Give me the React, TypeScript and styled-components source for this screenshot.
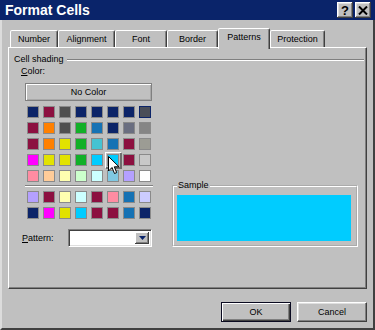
import React from "react";
import styled, { createGlobalStyle, css } from "styled-components";

const GlobalStyle = createGlobalStyle`
	html, body {
		margin: 0;
		padding: 0;
		background: #c0c0c0;
	}
	body {
		font-family: "Liberation Sans", Arial, sans-serif;
		font-size: 9px;
		color: #000;
	}
	* {
		box-sizing: border-box;
	}
`;

const Dialog = styled.div`
	width: 375px;
	height: 330px;
	background: #c0c0c0;
	display: flex;
	flex-direction: column;
	overflow: hidden;
`;

const TitleBar = styled.div`
	height: 20px;
	flex: none;
	background: #0a246a;
	display: flex;
	align-items: center;
	gap: 2px;
	padding: 0 4px 0 5px;
`;

const Title = styled.h1`
	flex: 1;
	margin: 0;
	color: #fff;
	font-size: 14px;
	font-weight: bold;
	line-height: 20px;
`;

const CaptionButton = styled.button`
	width: 16px;
	height: 16px;
	padding: 0;
	border: none;
	background: #c0c0c0;
	box-shadow: inset -1px -1px #404040, inset 1px 1px #fff,
		inset -2px -2px #808080, inset 2px 2px #dfdfdf;
	display: flex;
	align-items: center;
	justify-content: center;
	font: bold 13px "Liberation Sans", Arial, sans-serif;
	color: #000;
`;

const Body = styled.div`
	flex: 1;
	display: flex;
	flex-direction: column;
	border-left: 2px solid #dcdcdc;
	border-right: 2px solid #404040;
	border-bottom: 2px solid #404040;
	padding: 8px 6px 0 6px;
`;

const TabRow = styled.div`
	display: flex;
	align-items: flex-end;
	height: 19px;
	margin-left: 2px;
`;

const Tab = styled.div<{ $active?: boolean; $width: number }>`
	width: ${(p) => p.$width}px;
	height: 17px;
	display: flex;
	align-items: center;
	justify-content: center;
	border: 1px solid;
	border-bottom: none;
	border-color: #fff #404040 transparent #fff;
	border-radius: 2px 2px 0 0;
	box-shadow: inset -1px 0 #808080;
	background: #c0c0c0;
	line-height: 11px;

	${(p) =>
		p.$active &&
		css`
			height: 21px;
			margin-bottom: -2px;
			padding-bottom: 3px;
			position: relative;
			z-index: 1;
		`}
`;

const Panel = styled.div`
	height: 242px;
	border: 1px solid;
	border-color: #fff #404040 #404040 #fff;
	box-shadow: inset -1px -1px #808080;
	padding: 6px 2px 0 5px;
	display: flex;
	flex-direction: column;
`;

const GroupHeader = styled.div`
	display: flex;
	align-items: center;
	gap: 3px;
	height: 11px;
	line-height: 11px;
`;

const EtchedRule = styled.div<{ $width?: number }>`
	height: 2px;
	border-top: 1px solid #808080;
	border-bottom: 1px solid #fff;
	${(p) => (p.$width ? `width: ${p.$width}px;` : "flex: 1;")}
`;

const Columns = styled.div`
	display: flex;
	align-items: flex-end;
`;

const LeftColumn = styled.div`
	width: 158px;
	display: flex;
	flex-direction: column;
	align-items: flex-start;
`;

const FieldLabel = styled.div`
	margin: 1px 0 0 7px;
	line-height: 11px;
`;

const NoColorButton = styled.button`
	width: 127px;
	height: 18px;
	margin: 6px 0 0 11px;
	padding: 0;
	border: 1px solid #808080;
	background: #c0c0c0;
	box-shadow: inset 1px 1px #fff, inset -1px -1px #a8a8a8;
	font: 9px "Liberation Sans", Arial, sans-serif;
	color: #000;
`;

const Palette = styled.div<{ $top: number }>`
	position: relative;
	display: grid;
	grid-template-columns: repeat(8, 12px);
	gap: 4px;
	margin: ${(p) => p.$top}px 0 0 13px;
`;

const Swatch = styled.div<{ $color: string; $edge?: string; $selected?: boolean }>`
	width: 12px;
	height: 12px;
	background: ${(p) => p.$color};
	border: 1px solid ${(p) => p.$edge ?? "#8a8a8a"};

	${(p) =>
		p.$selected &&
		css`
			box-shadow: 0 0 0 1px #c0c0c0, 1px 1px 0 2px #6e6e6e, 0 0 0 2px #fff;
		`}
`;

const Pointer = styled.svg`
	position: absolute;
	left: 81px;
	top: 50px;
	pointer-events: none;
`;

const Separator = styled(EtchedRule)`
	margin: 3px 0 0 11px;
`;

const PatternRow = styled.div`
	display: flex;
	align-items: center;
	height: 18px;
	margin: 10px 0 0 8px;
`;

const PatternLabel = styled.span`
	width: 46px;
`;

const Select = styled.div`
	width: 84px;
	height: 18px;
	display: flex;
	border: 1px solid;
	border-color: #808080 #fff #fff #808080;
	box-shadow: inset 1px 1px #404040, inset -1px -1px #dfdfdf;
	padding: 2px;
	background: #fff;
`;

const SelectField = styled.div`
	flex: 1;
	background: #fff;
`;

const DropButton = styled.div`
	width: 14px;
	background: #c0c0c0;
	box-shadow: inset -1px -1px #404040, inset 1px 1px #fff, inset -2px -2px #808080;
	display: flex;
	align-items: center;
	justify-content: center;
`;

const SampleBox = styled.fieldset`
	width: 186px;
	min-width: 0;
	margin: 0;
	padding: 4px 5px 4px 3px;
	border: 2px groove #fff;
`;

const SampleLegend = styled.legend`
	padding: 0 1px;
	line-height: 11px;
	font-size: 9px;
`;

const SampleFill = styled.div<{ $color: string }>`
	height: 46px;
	background: ${(p) => p.$color};
`;

const Footer = styled.div`
	display: flex;
	justify-content: flex-end;
	gap: 6px;
	margin-top: 13px;
`;

const PushButton = styled.button<{ $default?: boolean }>`
	width: 70px;
	height: 20px;
	padding: 0;
	background: #c0c0c0;
	font: 9px "Liberation Sans", Arial, sans-serif;
	color: #000;
	border: 1px solid;
	border-color: #fff #404040 #404040 #fff;
	box-shadow: inset -1px -1px #808080, inset 1px 1px #dfdfdf;

	${(p) =>
		p.$default &&
		css`
			border-color: #0a0a20;
			box-shadow: inset 1px 1px #fff, inset -1px -1px #404040,
				inset -2px -2px #808080;
		`}
`;

const N = "#0c2468";
const R = "#8c1040";
const Y = "#e2e200";
const G = "#12b028";
const B = "#1672b4";
const C = "#00ccff";

const mainColors = [
	[N, R, "#505050", N, N, N, N, "#4a4e58"],
	[R, "#ff8000", "#505050", G, B, N, "#6a6e80", "#858585"],
	[R, "#ff8000", Y, G, "#45c2d2", B, R, "#9c9c94"],
	["#ff00ff", Y, Y, G, C, C, R, "#c8c8c8"],
	["#ff8ca2", "#ffcc99", "#ffffb0", "#ccffcc", "#ccffff", "#80c8e2", "#b4a0ff", "#ffffff"],
];

const chartColors = [
	["#b4a0ff", R, "#ffffb0", "#ccffff", R, "#ff8ca2", B, "#ccccff"],
	[N, "#ff00ff", Y, C, R, R, B, N],
];

const tabs = [
	{ label: "Number", width: 48 },
	{ label: "Alignment", width: 57 },
	{ label: "Font", width: 52 },
	{ label: "Border", width: 51 },
	{ label: "Patterns", width: 52 },
	{ label: "Protection", width: 55 },
];

const App: React.FC = () => {
	const selected = { row: 3, col: 5 };

	return (
		<>
			<GlobalStyle />
			<Dialog>
				<TitleBar>
					<Title>Format Cells</Title>
					<CaptionButton>?</CaptionButton>
					<CaptionButton>
						<svg width="10" height="9" viewBox="0 0 10 9">
							<path d="M1 0.5 L9 8.5 M9 0.5 L1 8.5" stroke="#000" strokeWidth="2" />
						</svg>
					</CaptionButton>
				</TitleBar>
				<Body>
					<TabRow>
						{tabs.map((tab) => (
							<Tab key={tab.label} $width={tab.width} $active={tab.label === "Patterns"}>
								{tab.label}
							</Tab>
						))}
					</TabRow>
					<Panel>
						<GroupHeader>
							<span>Cell shading</span>
							<EtchedRule />
						</GroupHeader>
						<Columns>
							<LeftColumn>
								<FieldLabel>
									<u>C</u>olor:
								</FieldLabel>
								<NoColorButton>No Color</NoColorButton>
								<Palette $top={5}>
									{mainColors.map((row, r) =>
										row.map((color, c) => (
											<Swatch
												key={`${r}-${c}`}
												$color={color}
												$edge={r === 0 && c === 7 ? N : undefined}
												$selected={r === selected.row && c === selected.col}
											/>
										))
									)}
									<Pointer width="12" height="19" viewBox="0 0 12 19">
										<path
											d="M0.5 0.5 L0.5 15 L4 11.5 L6.5 17.5 L8.7 16.6 L6.3 10.8 L11 10.8 Z"
											fill="#fff"
											stroke="#000"
											strokeWidth="1"
										/>
									</Pointer>
								</Palette>
								<Separator $width={128} />
								<Palette $top={4}>
									{chartColors.map((row, r) =>
										row.map((color, c) => <Swatch key={`${r}-${c}`} $color={color} />)
									)}
								</Palette>
								<PatternRow>
									<PatternLabel>
										<u>P</u>attern:
									</PatternLabel>
									<Select>
										<SelectField />
										<DropButton>
											<svg width="7" height="4" viewBox="0 0 7 4">
												<path d="M0 0 H7 L3.5 4 Z" fill="#0a246a" />
											</svg>
										</DropButton>
									</Select>
								</PatternRow>
							</LeftColumn>
							<SampleBox>
								<SampleLegend>Sample</SampleLegend>
								<SampleFill $color={C} />
							</SampleBox>
						</Columns>
					</Panel>
					<Footer>
						<PushButton $default>OK</PushButton>
						<PushButton>Cancel</PushButton>
					</Footer>
				</Body>
			</Dialog>
		</>
	);
};

export default App;
